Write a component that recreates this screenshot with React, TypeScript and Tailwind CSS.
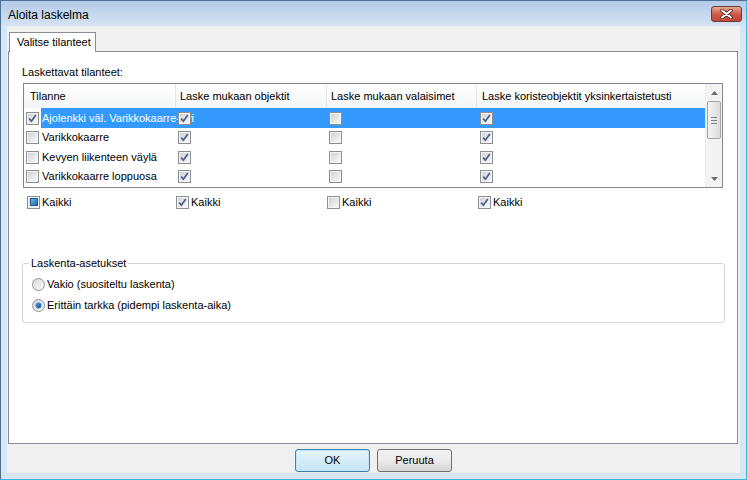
import React from 'react';

type CheckState = 'on' | 'off' | 'mixed';

const Check: React.FC<{ state: CheckState }> = ({ state }) => (
  <span className="relative inline-flex w-[13px] h-[13px] shrink-0 items-center justify-center border border-[#8e8f8f] bg-white">
    <span className="flex w-[11px] h-[11px] items-center justify-center border border-[#f4f4f4] bg-gradient-to-br from-[#d0d3d8] to-[#f8f8f8]">
      {state === 'on' && (
        <svg width="9" height="9" viewBox="0 0 9 9">
          <path d="M1.2 4.6 L3.4 7.2 L7.8 1" fill="none" stroke="#4a5b8e" strokeWidth="1.7" />
        </svg>
      )}
      {state === 'mixed' && (
        <span className="w-[8px] h-[8px] border border-[#1c5b94] bg-gradient-to-br from-[#62b8ea] to-[#1a6cae]" />
      )}
    </span>
  </span>
);

const Radio: React.FC<{ on?: boolean }> = ({ on }) => (
  <span className="inline-flex w-[13px] h-[13px] shrink-0 items-center justify-center rounded-full border border-[#8e8f8f] bg-gradient-to-br from-[#d6d8dc] to-[#fbfbfb]">
    {on && (
      <span className="w-[7px] h-[7px] rounded-full border border-[#6ea7d9] bg-gradient-to-br from-[#4c9be0] to-[#0f4f98]" />
    )}
  </span>
);

const rows: { name: string; cols: CheckState[]; selected?: boolean }[] = [
  { name: 'Ajolenkki väl. Varikkokaarre-ovi', cols: ['on', 'on', 'off', 'on'], selected: true },
  { name: 'Varikkokaarre', cols: ['off', 'on', 'off', 'on'] },
  { name: 'Kevyen liikenteen väylä', cols: ['off', 'on', 'off', 'on'] },
  { name: 'Varikkokaarre loppuosa', cols: ['off', 'on', 'off', 'on'] },
];

const App: React.FC = () => {
  return (
    <div
      className="w-[747px] h-[480px] flex flex-col border border-[#4f6f93] border-r-[#3ab8e0] border-b-[#3ab8e0] bg-[#d7e5f4] text-[11px] text-black"
      style={{ fontFamily: '"Liberation Sans", Arial, sans-serif' }}
    >
      {/* Title bar */}
      <div className="h-[25px] flex items-center justify-between pl-[7px] pr-[4px] bg-gradient-to-b from-[#b2cbe8] to-[#d5e3f3]">
        <span className="text-[12px] pt-[2px]">Aloita laskelma</span>
        <div className="mt-[1px] w-[31px] h-[16px] flex items-center justify-center rounded-[3px] border border-[#6b3a33] bg-gradient-to-b from-[#e5a995] via-[#cf5a48] to-[#c2473a]">
          <svg width="13" height="10" viewBox="0 0 13 10">
            <path d="M2 1.5 L11 8.5 M11 1.5 L2 8.5" stroke="#5a2b26" strokeWidth="3.6" strokeLinecap="round" />
            <path d="M2 1.5 L11 8.5 M11 1.5 L2 8.5" stroke="#ffffff" strokeWidth="2" strokeLinecap="round" />
          </svg>
        </div>
      </div>

      {/* Frame + client */}
      <div className="flex-1 flex px-[6px] pb-[6px]">
        <div className="flex-1 flex flex-col bg-[#f0f0f0]">
          {/* Tab header */}
          <div className="mt-[6px] pl-[2px] flex">
            <div className="relative z-10 -mb-px w-[87px] h-[20px] pl-[7px] flex items-center border border-b-0 border-[#898c95] bg-white">
              Valitse tilanteet
            </div>
          </div>

          {/* Tab panel */}
          <div className="ml-px w-[730px] h-[393px] border border-[#898c95] bg-white flex flex-col pl-[13px] pt-[13px]">
            <div className="h-[14px] leading-[14px]">Laskettavat tilanteet:</div>

            {/* List view */}
            <div className="mt-[4px] ml-px w-[700px] h-[105px] border border-[#828790] flex">
              <div className="w-[681px] flex flex-col">
                <div className="h-[24px] flex bg-gradient-to-b from-white to-[#f4f5f6]">
                  <div className="w-[152px] pl-[6px] flex items-center border-r border-[#e3e5e8]">Tilanne</div>
                  <div className="w-[151px] pl-[4px] flex items-center border-r border-[#e3e5e8]">Laske mukaan objektit</div>
                  <div className="w-[150px] pl-[4px] flex items-center border-r border-[#e3e5e8]">Laske mukaan valaisimet</div>
                  <div className="flex-1 pl-[5px] flex items-center">Laske koristeobjektit yksinkertaistetusti</div>
                </div>
                {rows.map((r, i) => (
                  <div key={r.name} className={`flex items-center ${i % 2 === 0 ? 'h-5' : 'h-[19px]'}`}>
                    <div className="w-[17px] h-full pl-[2px] flex items-center">
                      <Check state={r.cols[0]} />
                    </div>
                    <div className={`flex-1 h-full flex ${r.selected ? 'bg-[#3399ff] text-white' : ''}`}>
                      <div className="w-[136px] pl-px flex items-center whitespace-nowrap">{r.name}</div>
                      <div className="w-[151px] pl-px flex items-center">
                        <Check state={r.cols[1]} />
                      </div>
                      <div className="w-[151px] pl-px flex items-center">
                        <Check state={r.cols[2]} />
                      </div>
                      <div className="flex-1 pl-px flex items-center">
                        <Check state={r.cols[3]} />
                      </div>
                    </div>
                  </div>
                ))}
              </div>

              {/* Scrollbar */}
              <div className="w-[17px] flex flex-col bg-[#f3f3f3] border-l border-[#ececec]">
                <div className="h-[17px] flex items-center justify-center">
                  <svg width="7" height="4" viewBox="0 0 7 4">
                    <path d="M0 4 L3.5 0 L7 4 Z" fill="#6b6b6b" />
                  </svg>
                </div>
                <div className="mx-px h-[38px] rounded-[2px] border border-[#a4a4a4] bg-gradient-to-r from-[#f4f4f4] to-[#dcdcdc] flex flex-col items-center justify-center gap-[2px]">
                  <span className="w-[6px] h-px bg-[#7f7f7f]" />
                  <span className="w-[6px] h-px bg-[#7f7f7f]" />
                  <span className="w-[6px] h-px bg-[#7f7f7f]" />
                </div>
                <div className="flex-1" />
                <div className="h-[17px] flex items-center justify-center">
                  <svg width="7" height="4" viewBox="0 0 7 4">
                    <path d="M0 0 L3.5 4 L7 0 Z" fill="#6b6b6b" />
                  </svg>
                </div>
              </div>
            </div>

            {/* Kaikki row */}
            <div className="mt-[7px] ml-[5px] h-[14px] flex items-center">
              <div className="w-[149px] flex items-center gap-[2px]">
                <Check state="mixed" />
                <span>Kaikki</span>
              </div>
              <div className="w-[151px] flex items-center gap-[2px]">
                <Check state="on" />
                <span>Kaikki</span>
              </div>
              <div className="w-[151px] flex items-center gap-[2px]">
                <Check state="off" />
                <span>Kaikki</span>
              </div>
              <div className="flex items-center gap-[2px]">
                <Check state="on" />
                <span>Kaikki</span>
              </div>
            </div>

            {/* Group box */}
            <fieldset className="mt-[47px] w-[703px] h-[67px] border border-[#d5d5d5] rounded-[3px] pl-[8px] pb-[5px]">
              <legend className="-ml-[2px] px-[2px] leading-[14px]">Laskenta-asetukset</legend>
              <div className="mt-[4px] flex flex-col">
                <label className="h-[21px] ml-px flex items-center gap-[2px]">
                  <Radio />
                  <span>Vakio (suositeltu laskenta)</span>
                </label>
                <label className="h-[21px] ml-px flex items-center gap-[2px]">
                  <Radio on />
                  <span>Erittäin tarkka (pidempi laskenta-aika)</span>
                </label>
              </div>
            </fieldset>
          </div>

          {/* Buttons */}
          <div className="mt-[5px] flex justify-center gap-[7px]">
            <button className="w-[75px] h-[23px] rounded-[3px] border border-[#3c7fb1] bg-gradient-to-b from-[#e5f4fc] to-[#c4e5f6] shadow-[inset_0_0_0_1px_#bfe6fa]">
              OK
            </button>
            <button className="w-[75px] h-[23px] rounded-[3px] border border-[#707070] bg-gradient-to-b from-[#f2f2f2] via-[#ebebeb] to-[#d6d6d6]">
              Peruuta
            </button>
          </div>
        </div>
      </div>
    </div>
  );
};

export default App;
